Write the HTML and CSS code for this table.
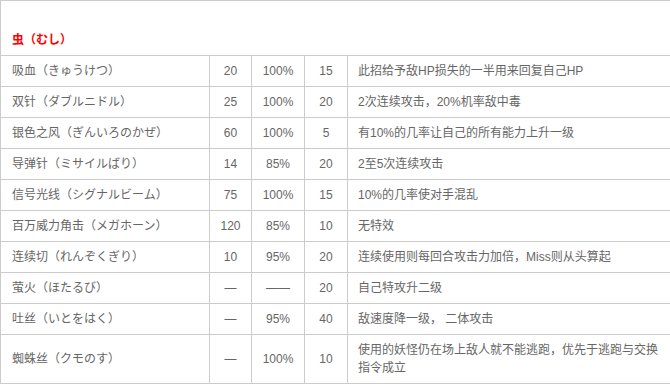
FILE: index.html
```html
<!DOCTYPE html>
<html lang="zh-CN">
<head>
<meta charset="utf-8">
<title>虫（むし）</title>
<link rel="stylesheet" href="styles.css">
</head>
<body>
<table class="moves">
  <colgroup>
    <col class="c-name">
    <col class="c-pow">
    <col class="c-acc">
    <col class="c-pp">
    <col class="c-eff">
  </colgroup>
  <tbody>
    <tr class="type-row"><td colspan="5" class="type">虫（むし）</td></tr>
    <tr><td class="name">吸血（きゅうけつ）</td><td class="num">20</td><td class="num">100%</td><td class="num">15</td><td class="eff">此招给予敌HP损失的一半用来回复自己HP</td></tr>
    <tr><td class="name">双针（ダブルニドル）</td><td class="num">25</td><td class="num">100%</td><td class="num">20</td><td class="eff">2次连续攻击，20%机率敌中毒</td></tr>
    <tr><td class="name">银色之风（ぎんいろのかぜ）</td><td class="num">60</td><td class="num">100%</td><td class="num">5</td><td class="eff">有10%的几率让自己的所有能力上升一级</td></tr>
    <tr><td class="name">导弹针（ミサイルばり）</td><td class="num">14</td><td class="num">85%</td><td class="num">20</td><td class="eff">2至5次连续攻击</td></tr>
    <tr><td class="name">信号光线（シグナルビーム）</td><td class="num">75</td><td class="num">100%</td><td class="num">15</td><td class="eff">10%的几率使对手混乱</td></tr>
    <tr><td class="name">百万威力角击（メガホーン）</td><td class="num">120</td><td class="num">85%</td><td class="num">10</td><td class="eff">无特效</td></tr>
    <tr><td class="name">连续切（れんぞくぎり）</td><td class="num">10</td><td class="num">95%</td><td class="num">20</td><td class="eff">连续使用则每回合攻击力加倍，Miss则从头算起</td></tr>
    <tr><td class="name">萤火（ほたるび）</td><td class="num">—</td><td class="num">——</td><td class="num">20</td><td class="eff">自己特攻升二级</td></tr>
    <tr><td class="name">吐丝（いとをはく）</td><td class="num">—</td><td class="num">95%</td><td class="num">40</td><td class="eff">敌速度降一级， 二体攻击</td></tr>
    <tr><td class="name">蜘蛛丝（クモのす）</td><td class="num">—</td><td class="num">100%</td><td class="num">10</td><td class="eff">使用的妖怪仍在场上敌人就不能逃跑，优先于逃跑与交换指令成立</td></tr>
  </tbody>
</table>
</body>
</html>
```
FILE: styles.css
```css
html, body {
  margin: 0;
  padding: 0;
  background: #fff;
}
.moves {
  border-collapse: collapse;
  table-layout: fixed;
  width: 670px;
  font-family: "Liberation Sans", "Noto Sans CJK SC", sans-serif;
  font-size: 12px;
  line-height: 18px;
  color: #666;
}
.c-name { width: 209px; }
.c-pow { width: 42px; }
.c-acc { width: 53px; }
.c-pp { width: 43px; }
.c-eff { width: 323px; }
.moves td {
  border: 1px solid #ccc;
  padding: 6px 10px;
  vertical-align: middle;
}
.moves td.name { padding-left: 11px; }
.moves td.num { text-align: center; padding: 6px 0; }
.moves td.type {
  height: 42px;
  vertical-align: bottom;
  color: #f00;
  font-weight: bold;
  padding-left: 11px;
}
```
